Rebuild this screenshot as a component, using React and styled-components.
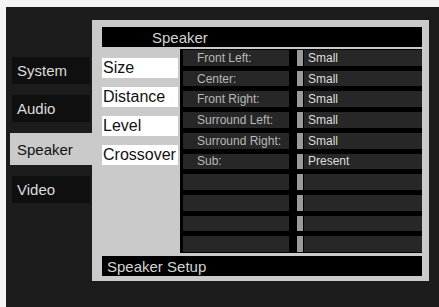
import React from 'react';
import styled, { createGlobalStyle } from 'styled-components';

const GlobalStyle = createGlobalStyle`
  html, body {
    margin: 0;
    padding: 0;
    background: #f4f4f4;
  }
  body {
    font-family: "Liberation Sans", Arial, sans-serif;
  }
`;

const Frame = styled.div`
  margin: 7px 0 0 6px;
  width: 433px;
  height: 300px;
  background: #1c1c1c;
  display: flex;
  align-items: flex-start;
  padding: 13px 0 0 4px;
  box-sizing: border-box;
`;

const Nav = styled.nav`
  width: 82px;
  margin-top: 37px;
  display: flex;
  flex-direction: column;
  gap: 11px;
`;

const Tab = styled.div`
  height: ${p => (p.$active ? '32px' : '27px')};
  margin: ${p => (p.$active ? '0' : '0 2px')};
  padding-left: ${p => (p.$active ? '7px' : '5px')};
  background: ${p => (p.$active ? '#cacaca' : '#0f0f0f')};
  color: ${p => (p.$active ? '#111' : '#dcdcdc')};
  font-size: 15px;
  display: flex;
  align-items: center;
`;

const Panel = styled.section`
  width: 337px;
  height: 261px;
  background: #cacaca;
  box-sizing: border-box;
  padding: 7px 7px 5px 10px;
  display: flex;
  flex-direction: column;
`;

const Bar = styled.div`
  height: 20px;
  background: #000;
  color: #d4d4d4;
  font-size: 15px;
  display: flex;
  align-items: center;
  padding-left: ${p => p.$indent || 5}px;
`;

const Middle = styled.div`
  height: 204px;
  margin: 2px 0 3px;
  display: flex;
  gap: 2px;
`;

const SubMenu = styled.div`
  width: 76px;
  padding-top: 9px;
  display: flex;
  flex-direction: column;
  gap: 9px;
`;

const SubItem = styled.div`
  height: 20px;
  background: #fff;
  color: #111;
  font-size: 16px;
  display: flex;
  align-items: center;
  padding-left: 1px;
`;

const Table = styled.div`
  flex: 1;
  background: #000;
  padding: 1px 0 1px 3px;
  display: flex;
  flex-direction: column;
  gap: 5px;
`;

const Row = styled.div`
  flex: 1;
  display: flex;
`;

const Cell = styled.div`
  background: #272727;
  font-size: 12px;
  display: flex;
  align-items: center;
  white-space: nowrap;
`;

const Label = styled(Cell)`
  width: 106px;
  padding-left: 14px;
  box-sizing: border-box;
  color: #b8b8b8;
`;

const Marker = styled.div`
  width: 6px;
  margin-left: 8px;
  background: #9a9a9a;
`;

const Value = styled(Cell)`
  flex: 1;
  margin-left: 1px;
  padding-left: 4px;
  color: #dedede;
`;

const rows = [
  ['Front Left:', 'Small'],
  ['Center:', 'Small'],
  ['Front Right:', 'Small'],
  ['Surround Left:', 'Small'],
  ['Surround Right:', 'Small'],
  ['Sub:', 'Present'],
  ['', ''],
  ['', ''],
  ['', ''],
  ['', ''],
];

export default function App() {
  return (
    <>
      <GlobalStyle />
      <Frame>
        <Nav>
          <Tab>System</Tab>
          <Tab>Audio</Tab>
          <Tab $active>Speaker</Tab>
          <Tab>Video</Tab>
        </Nav>
        <Panel>
          <Bar $indent={50}>Speaker</Bar>
          <Middle>
            <SubMenu>
              <SubItem>Size</SubItem>
              <SubItem>Distance</SubItem>
              <SubItem>Level</SubItem>
              <SubItem>Crossover</SubItem>
            </SubMenu>
            <Table>
              {rows.map(([label, value], i) => (
                <Row key={i}>
                  <Label>{label}</Label>
                  <Marker />
                  <Value>{value}</Value>
                </Row>
              ))}
            </Table>
          </Middle>
          <Bar>Speaker Setup</Bar>
        </Panel>
      </Frame>
    </>
  );
}
